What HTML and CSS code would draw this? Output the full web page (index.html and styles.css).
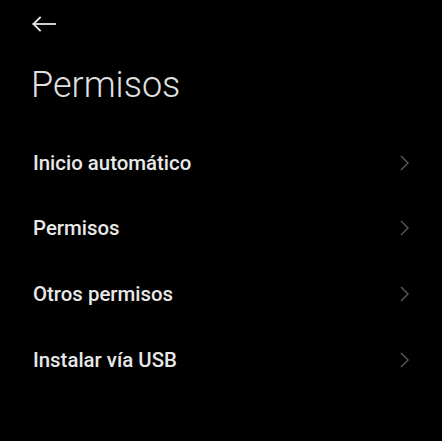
FILE: index.html
```html
<!DOCTYPE html>
<html lang="es">
<head>
<meta charset="utf-8">
<link rel="stylesheet" href="styles.css">
</head>
<body>
<div class="screen">
  <header class="topbar">
    <svg class="back" width="24" height="16" viewBox="0 0 24 16" fill="none" stroke="#e8e8e8" stroke-width="1.8" stroke-linecap="square">
      <path d="M1.5 8 H23"/>
      <path d="M8 1.5 L1.5 8 L8 14.5"/>
    </svg>
  </header>
  <h1 class="title">Permisos</h1>
  <ul class="list">
    <li class="row"><span class="label">Inicio automático</span><svg class="chev" width="9" height="16" viewBox="0 0 9 16" fill="none" stroke="#5a5a5a" stroke-width="1.4"><path d="M1 1 L8 8 L1 15"/></svg></li>
    <li class="row"><span class="label">Permisos</span><svg class="chev" width="9" height="16" viewBox="0 0 9 16" fill="none" stroke="#5a5a5a" stroke-width="1.4"><path d="M1 1 L8 8 L1 15"/></svg></li>
    <li class="row"><span class="label">Otros permisos</span><svg class="chev" width="9" height="16" viewBox="0 0 9 16" fill="none" stroke="#5a5a5a" stroke-width="1.4"><path d="M1 1 L8 8 L1 15"/></svg></li>
    <li class="row"><span class="label">Instalar vía USB</span><svg class="chev" width="9" height="16" viewBox="0 0 9 16" fill="none" stroke="#5a5a5a" stroke-width="1.4"><path d="M1 1 L8 8 L1 15"/></svg></li>
  </ul>
</div>
</body>
</html>
```
FILE: styles.css
```css
html, body {
  margin: 0;
  padding: 0;
  background: #000;
}
body {
  font-family: Roboto, "Noto Sans", sans-serif;
  color: #e6e6e6;
  width: 442px;
  height: 441px;
  overflow: hidden;
}
.screen {
  display: flex;
  flex-direction: column;
}
.topbar {
  height: 47px;
  display: flex;
  align-items: center;
  padding-left: 32px;
}
.back {
  display: block;
}
.title {
  margin: 16px 0 0 0;
  padding-left: 31px;
  font-size: 36px;
  font-weight: 300;
  line-height: 44px;
  color: #e0e0e0;
}
.list {
  list-style: none;
  margin: 23px 0 0 0;
  padding: 0;
}
.row {
  height: 65.67px;
  display: flex;
  align-items: center;
  justify-content: space-between;
  padding: 0 33px 0 33px;
}
.label {
  font-size: 20.4px;
  font-weight: 500;
  color: #e8e8e8;
}
.chev {
  display: block;
}
```
